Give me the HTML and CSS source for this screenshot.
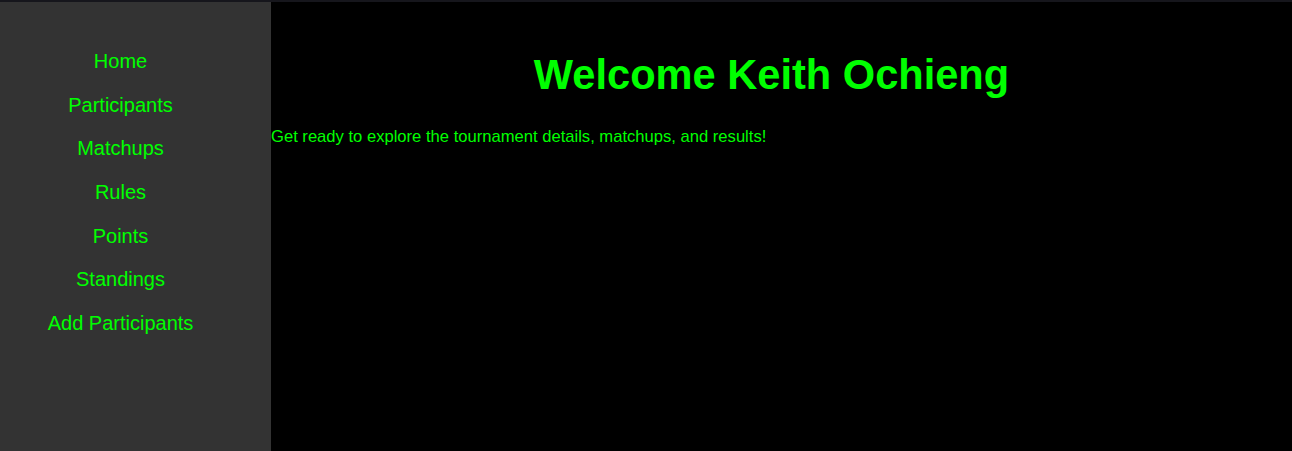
FILE: index.html
```html
<!DOCTYPE html>
<html lang="en">
<head>
<meta charset="utf-8">
<title>Tournament</title>
<link rel="stylesheet" href="styles.css">
</head>
<body>
<div class="topbar"></div>
<div class="layout">
  <nav class="sidebar">
    <a href="#" class="nav-link">Home</a>
    <a href="#" class="nav-link">Participants</a>
    <a href="#" class="nav-link">Matchups</a>
    <a href="#" class="nav-link">Rules</a>
    <a href="#" class="nav-link">Points</a>
    <a href="#" class="nav-link">Standings</a>
    <a href="#" class="nav-link">Add Participants</a>
  </nav>
  <main class="content">
    <h1 class="title">Welcome Keith Ochieng</h1>
    <p class="intro">Get ready to explore the tournament details, matchups, and results!</p>
  </main>
</div>
</body>
</html>
```
FILE: styles.css
```css
html, body {
  margin: 0;
  padding: 0;
  height: 100%;
  background: #000;
  font-family: "Liberation Sans", Arial, sans-serif;
  color: #00ff00;
}
.topbar {
  height: 2px;
  background: #16161c;
}
.layout {
  display: flex;
  height: calc(100% - 2px);
}
.sidebar {
  width: 241px;
  padding: 38px 30px 0 0;
  background: #333333;
  display: flex;
  flex-direction: column;
  flex-shrink: 0;
}
.nav-link {
  display: block;
  text-align: center;
  color: #00ff00;
  text-decoration: none;
  font-size: 20px;
  line-height: 23.67px;
  padding: 10px 0;
}
.content {
  flex: 1;
  padding-right: 20px;
}
.title {
  margin: 49px 0 28px;
  text-align: center;
  font-size: 41.6px;
  line-height: 48px;
  font-weight: bold;
}
.intro {
  margin: 0;
  font-size: 16.6px;
  line-height: 19px;
}
```
